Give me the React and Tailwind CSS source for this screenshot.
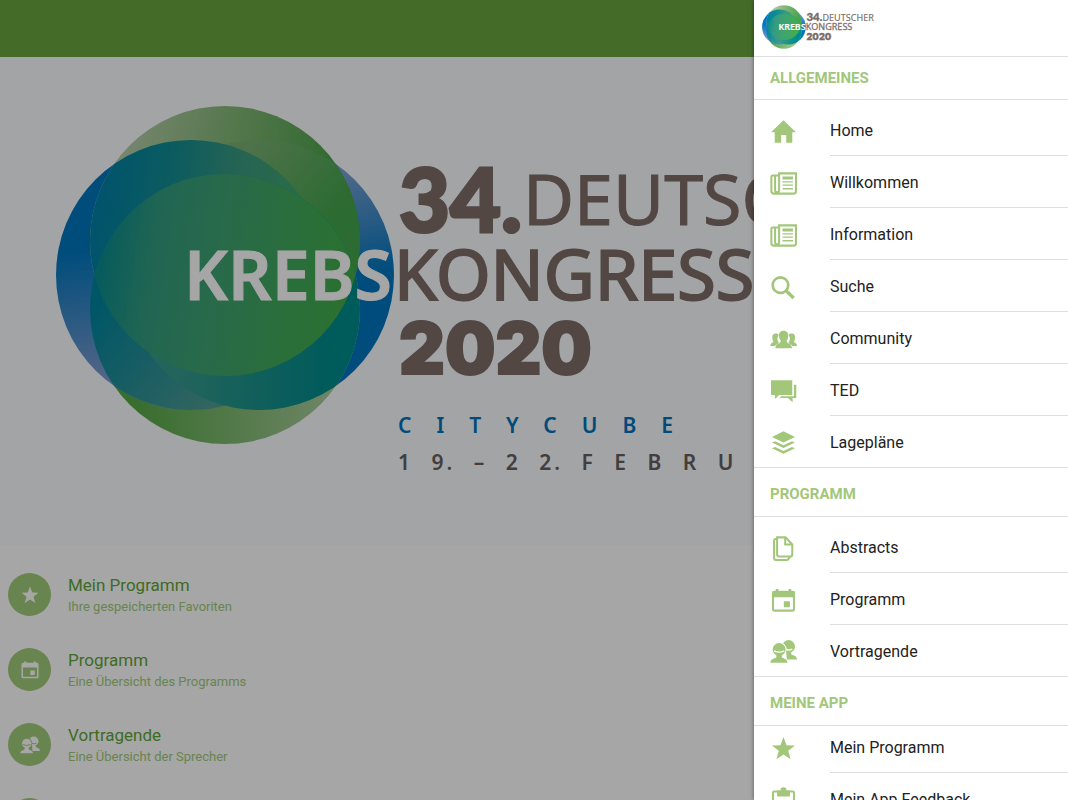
import { useId } from 'react';
import clsx from 'clsx';

const ICONS = {
  home: <path d="M3 42 40 7l37 35H66v31H48V50H33v23H14V42z" />,
  news: (
    <>
      <path
        d="M27 17v-7h50v53a7 7 0 0 1-7 7H12a8 8 0 0 1-8-8V20a4 4 0 0 1 4-4h19M27 16v44a6 6 0 0 1-12 0V18"
        fill="none"
        stroke="currentColor"
        strokeWidth="6"
      />
      <path d="M37 19h31v9H37zM37 33h31v4H37zM37 43h31v4H37zM37 53h31v5H37z" />
    </>
  ),
  search: (
    <>
      <circle cx="31" cy="33" r="23" fill="none" stroke="currentColor" strokeWidth="8" />
      <path d="m47 49 23 22" stroke="currentColor" strokeWidth="10" />
    </>
  ),
  people: (
    <>
      <path d="M17 22c-8 0-11 6-10 14 0 5 2 7 3 10-2 5-9 4-9 13h14c2-5 7-5 11-9-1-4-4-6-4-12 0-5 2-8 4-12-2-3-5-4-9-4zM64 22c8 0 11 6 10 14 0 5-2 7-3 10 2 5 9 4 9 13H66c-2-5-7-5-11-9 1-4 4-6 4-12 0-5-2-8-4-12 2-3 5-4 9-4z" />
      <path d="M40 14c-10 0-14 7-13 16 0 7 3 10 5 14 0 10-16 6-16 22h49c0-16-16-12-16-22 2-4 5-7 5-14 1-9-4-16-14-16z" />
    </>
  ),
  chat: <path d="M3 7h63v43H27L15 62V50H3zM71 20h7v39H67v13L53 59H28l6-5h37z" />,
  layers: (
    <path d="m40 7 34 17-34 16L6 24zM6 40l9-4 25 12 25-12 9 4-34 16zM6 57l9-4 25 12 25-12 9 4-34 16z" />
  ),
  pages: (
    <g fill="none" stroke="currentColor" strokeWidth="6">
      <path d="M21 7h25l20 21v30a6 6 0 0 1-6 6H27a6 6 0 0 1-6-6zM45 7v21h21" />
      <path d="M21 12h-4a5 5 0 0 0-5 5v51a6 6 0 0 0 6 6h34l8-9" />
    </g>
  ),
  calendar: (
    <>
      <rect x="9" y="14" width="62" height="56" rx="3" fill="none" stroke="currentColor" strokeWidth="6" />
      <path d="M8 12h9V6h8v6h30V6h8v6h9v18H8zM41 42h18v18H41z" />
    </>
  ),
  speakers: (
    <>
      <mask id="speakers-back">
        <rect width="80" height="80" fill="white" />
        <path d="M46 33q10 5 20 0" fill="none" stroke="black" strokeWidth="4" />
        <circle cx="27" cy="34" r="22" fill="black" />
        <path d="M20 50h16c0 8 18 8 18 27H0z" fill="black" />
      </mask>
      <mask id="speakers-front">
        <rect width="80" height="80" fill="white" />
        <path d="M12 38q15 8 30 0" fill="none" stroke="black" strokeWidth="4" />
      </mask>
      <g mask="url(#speakers-back)">
        <circle cx="55" cy="25" r="19" />
        <path d="M48 42h15v6c4 4 17 3 17 16H50z" />
      </g>
      <g mask="url(#speakers-front)">
        <circle cx="27" cy="34" r="19" />
        <path d="M19 50h16v7c4 4 16 4 17 16H1c1-12 14-12 18-16z" />
      </g>
    </>
  ),
  star: <path d="m40 6 9 24 25 1-20 16 7 25-21-14-21 14 7-25L6 31l25-1z" />,
  clipboard: (
    <>
      <rect x="9" y="16" width="62" height="62" rx="3" fill="none" stroke="currentColor" strokeWidth="6" />
      <path d="M21 13h10a9 9 0 0 1 18 0h10v18H21z" />
    </>
  ),
};

function Icon({ name, className }) {
  return (
    <svg viewBox="0 0 80 80" fill="currentColor" className={clsx('shrink-0', className)} aria-hidden="true">
      {ICONS[name]}
    </svg>
  );
}

const menu = [
  {
    title: 'ALLGEMEINES',
    items: [
      ['home', 'Home'],
      ['news', 'Willkommen'],
      ['news', 'Information'],
      ['search', 'Suche'],
      ['people', 'Community'],
      ['chat', 'TED'],
      ['layers', 'Lagepläne'],
    ],
  },
  {
    title: 'PROGRAMM',
    items: [
      ['pages', 'Abstracts'],
      ['calendar', 'Programm'],
      ['speakers', 'Vortragende'],
    ],
  },
  {
    title: 'MEINE APP',
    tight: true,
    items: [
      ['star', 'Mein Programm'],
      ['clipboard', 'Mein App Feedback'],
    ],
  },
];

const shortcuts = [
  { icon: 'star', title: 'Mein Programm', text: 'Ihre gespeicherten Favoriten' },
  { icon: 'calendar', title: 'Programm', text: 'Eine Übersicht des Programms' },
  { icon: 'speakers', title: 'Vortragende', text: 'Eine Übersicht der Sprecher' },
  { icon: 'people', title: 'Community', text: 'Tauschen Sie sich aus' },
];

// Four overlapping discs around one centre
const DISCS = {
  right: [259, 275],
  bottom: [225, 309],
  left: [191, 275],
  top: [225, 241],
};

// name, axis, colours spread evenly along it
const GRADIENTS = [
  ['gRight', [320, 160, 350, 280], ['#8fa6d6', '#0077c0']],
  ['gBottom', [130, 400, 330, 400], ['#55a845', '#a9cc9c']],
  ['gLeft', [90, 250, 110, 390], ['#0077bf', '#8a9fd0']],
  ['gTop', [120, 150, 340, 200], ['#b6cfaa', '#7fb673', '#45a045']],
  ['topRight', [240, 150, 330, 220], ['#7cb074', '#44a54d']],
  ['leftBottom', [100, 300, 220, 400], ['#00859e', '#4f9c92']],
  ['rightBottom', [180, 360, 330, 360], ['#369a8e', '#008c8c']],
  ['leftTop', [90, 210, 300, 240], ['#0080a8', '#108c94', '#3a9a80', '#42a670']],
  ['core', [90, 230, 350, 270], ['#008894', '#329c80', '#3ea372', '#41a95e', '#42ad4a']],
];

function Lens({ id, a, b, fill }) {
  return (
    <g clipPath={`url(#${id}-${a})`}>
      <circle cx={DISCS[b][0]} cy={DISCS[b][1]} r="135" fill={`url(#${id}-${fill})`} />
    </g>
  );
}

function Logo({ viewBox, className, withDate }) {
  const id = useId();

  return (
    <svg viewBox={viewBox} className={className} role="img" aria-label="34. Deutscher Krebskongress 2020">
      <defs>
        {Object.entries(DISCS).map(([name, [cx, cy]]) => (
          <clipPath key={name} id={`${id}-${name}`}>
            <circle cx={cx} cy={cy} r="135" />
          </clipPath>
        ))}
        {GRADIENTS.map(([name, [x1, y1, x2, y2], colors]) => (
          <linearGradient key={name} id={`${id}-${name}`} gradientUnits="userSpaceOnUse" x1={x1} y1={y1} x2={x2} y2={y2}>
            {colors.map((color, i) => (
              <stop key={color} offset={i / (colors.length - 1)} stopColor={color} />
            ))}
          </linearGradient>
        ))}
      </defs>
      <circle cx="259" cy="275" r="135" fill={`url(#${id}-gRight)`} />
      <circle cx="225" cy="309" r="135" fill={`url(#${id}-gBottom)`} />
      <circle cx="191" cy="275" r="135" fill={`url(#${id}-gLeft)`} />
      <circle cx="225" cy="241" r="135" fill={`url(#${id}-gTop)`} />
      <Lens id={id} a="top" b="right" fill="topRight" />
      <Lens id={id} a="left" b="bottom" fill="leftBottom" />
      <Lens id={id} a="left" b="top" fill="leftTop" />
      <Lens id={id} a="right" b="bottom" fill="rightBottom" />
      <Lens id={id} a="top" b="bottom" fill="core" />
      <g fontFamily="'Noto Sans', sans-serif" fontSize="70" fill="#7e6d68" stroke="#7e6d68" strokeWidth="0">
        <text x="184" y="300" fill="#ffffff" stroke="#ffffff" strokeWidth="1" fontSize="68" fontWeight="600">KREBS</text>
        <text x="399" y="232" fontFamily="Lato, sans-serif" fontSize="88" fontWeight="900" strokeWidth="3">34.</text>
        <text x="523" y="225" strokeWidth="1">DEUTSCHER</text>
        <text x="394" y="300" strokeWidth="2">KONGRESS</text>
        <text x="399" y="374" fontFamily="Inter, sans-serif" fontSize="71" fontWeight="900" strokeWidth="2">2020</text>
        {withDate && (
          <>
            <text x="398" y="433" fill="#0073bd" fontSize="21" fontWeight="600" letterSpacing="25">CITYCUBE</text>
            <text x="398" y="470" fill="#66605f" fontSize="21" fontWeight="600" letterSpacing="3" wordSpacing="10">
              1 9. – 2 2. F E B R U A R
            </text>
          </>
        )}
      </g>
    </svg>
  );
}

function MenuSection({ title, items, tight, first }) {
  return (
    <section>
      <h2
        className={clsx(
          'flex items-center border-b border-[#dedede] px-4 text-[15px] font-bold text-[#a2c77a]',
          first ? 'h-[43px]' : 'h-[49px] pt-1'
        )}
      >
        {title}
      </h2>
      <ul className={tight ? '-mt-[5px]' : 'pt-1'}>
        {items.map(([icon, label], i) => {
          const last = i === items.length - 1;
          return (
            <li key={label}>
              <a
                href="#"
                className={clsx('flex h-[52px] items-center pl-4', last && 'border-b border-[#dedede]')}
              >
                <Icon name={icon} className="mt-0.5 size-[27px] text-[#a2c77a]" />
                <span
                  className={clsx(
                    'ml-[33px] flex h-full flex-1 items-center pt-0.5 text-base text-[#222222]',
                    !last && 'border-b border-[#dedede]'
                  )}
                >
                  {label}
                </span>
              </a>
            </li>
          );
        })}
      </ul>
    </section>
  );
}

export default function App() {
  return (
    <div className="relative h-screen overflow-hidden bg-white font-['Roboto',sans-serif]">
      <header className="h-[57px] bg-[#6aa540]" />
      <main>
        <div className="bg-[#fbfcff]">
          <Logo viewBox="0 57 1068 488" className="h-auto w-full" withDate />
        </div>
        <ul className="pt-3">
          {shortcuts.map((item) => (
            <li key={item.title}>
              <a href="#" className="flex h-[75px] items-center gap-[17px] px-2">
                <span className="flex size-[43px] items-center justify-center rounded-full bg-[#a2cc7a] text-white">
                  <Icon name={item.icon} className="size-5" />
                </span>
                <span>
                  <span className="block text-[17px] leading-6 text-[#5fa637]">{item.title}</span>
                  <span className="block text-[13px] leading-5 text-[#a2cc7a]">{item.text}</span>
                </span>
              </a>
            </li>
          ))}
        </ul>
      </main>

      {/* Backdrop */}
      <div className="absolute inset-0 bg-black/35" />

      {/* Drawer */}
      <nav className="absolute inset-y-0 right-0 w-[314px] overflow-hidden bg-white shadow-[0_0_4px_rgba(0,0,0,0.5)]">
        <div className="flex h-[57px] items-start border-b border-[#dedede] px-2 pt-[5px]">
          <Logo viewBox="56 105 880 340" className="h-11 w-[114px]" />
        </div>
        {menu.map((section, i) => (
          <MenuSection key={section.title} {...section} first={i === 0} />
        ))}
      </nav>
    </div>
  );
}
